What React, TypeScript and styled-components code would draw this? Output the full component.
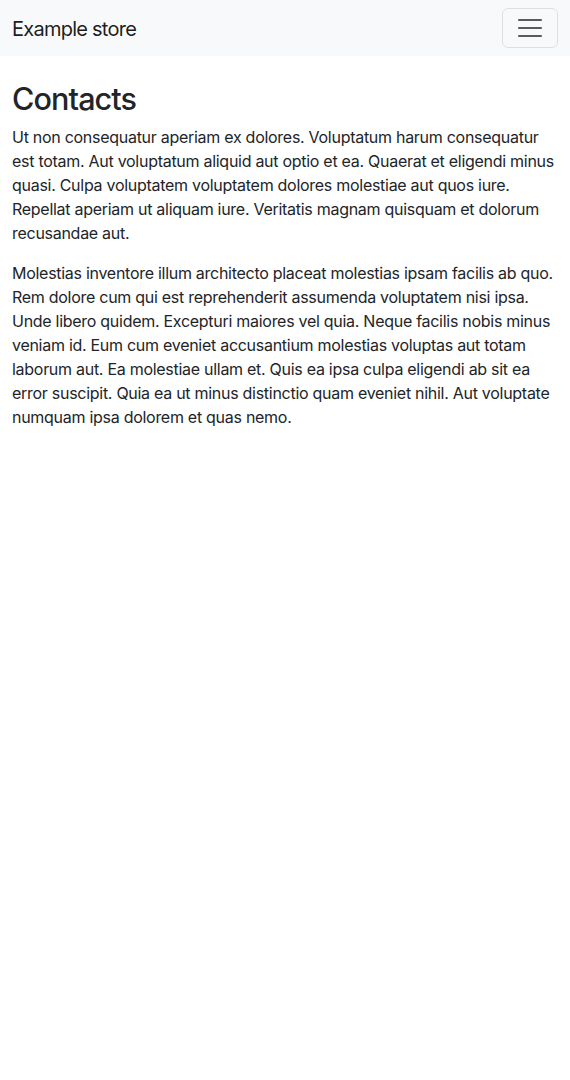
import React from "react";
import styled, { createGlobalStyle } from "styled-components";

const Global = createGlobalStyle`
  *, *::before, *::after { box-sizing: border-box; }
  body {
    margin: 0;
    font-family: Inter, "Noto Sans", sans-serif;
    font-size: 16px;
    line-height: 1.5;
    color: #212529;
    background: #fff;
    -webkit-font-smoothing: antialiased;
  }
`;

const Navbar = styled.nav`
  background: #f8f9fa;
  height: 56px;
  padding: 8px 12px;
  display: flex;
  align-items: center;
  justify-content: space-between;
`;

const Brand = styled.a`
  font-size: 20px;
  line-height: 30px;
  letter-spacing: -0.75px;
  color: rgba(0, 0, 0, 0.9);
  text-decoration: none;
  padding: 6px 0 4px;
`;

const Toggler = styled.button`
  width: 56px;
  height: 40px;
  padding: 0;
  background: transparent;
  border: 1px solid rgba(0, 0, 0, 0.1);
  border-radius: 6px;
  display: flex;
  align-items: center;
  justify-content: center;
  cursor: pointer;
`;

const Main = styled.main`
  padding: 25px 12px 0;
`;

const Title = styled.h1`
  margin: 0 0 7px;
  font-size: 30.55px;
  line-height: 1.2;
  font-weight: 500;
  letter-spacing: -0.9px;
`;

const Para = styled.p`
  margin: 0 0 16px;
  letter-spacing: -0.28px;
`;

export default function App() {
  return (
    <>
      <Global />
      <Navbar>
        <Brand href="#">Example store</Brand>
        <Toggler aria-label="Toggle navigation">
          <svg width="30" height="30" viewBox="0 0 30 30">
            <path
              stroke="rgba(33,37,41,0.75)"
              strokeLinecap="round"
              strokeMiterlimit="10"
              strokeWidth="2"
              d="M4 7h22M4 15h22M4 23h22"
            />
          </svg>
        </Toggler>
      </Navbar>
      <Main>
        <Title>Contacts</Title>
        <Para>
          Ut non consequatur aperiam ex dolores. Voluptatum harum consequatur est totam. Aut voluptatum aliquid aut optio et ea. Quaerat et eligendi minus quasi. Culpa voluptatem voluptatem dolores molestiae aut quos iure. Repellat aperiam ut aliquam iure. Veritatis magnam quisquam et dolorum recusandae aut.
        </Para>
        <Para>
          Molestias inventore illum architecto placeat molestias ipsam facilis ab quo. Rem dolore cum qui est reprehenderit assumenda voluptatem nisi ipsa. Unde libero quidem. Excepturi maiores vel quia. Neque facilis nobis minus veniam id. Eum cum eveniet accusantium molestias voluptas aut totam laborum aut. Ea molestiae ullam et. Quis ea ipsa culpa eligendi ab sit ea error suscipit. Quia ea ut minus distinctio quam eveniet nihil. Aut voluptate numquam ipsa dolorem et quas nemo.
        </Para>
      </Main>
    </>
  );
}
